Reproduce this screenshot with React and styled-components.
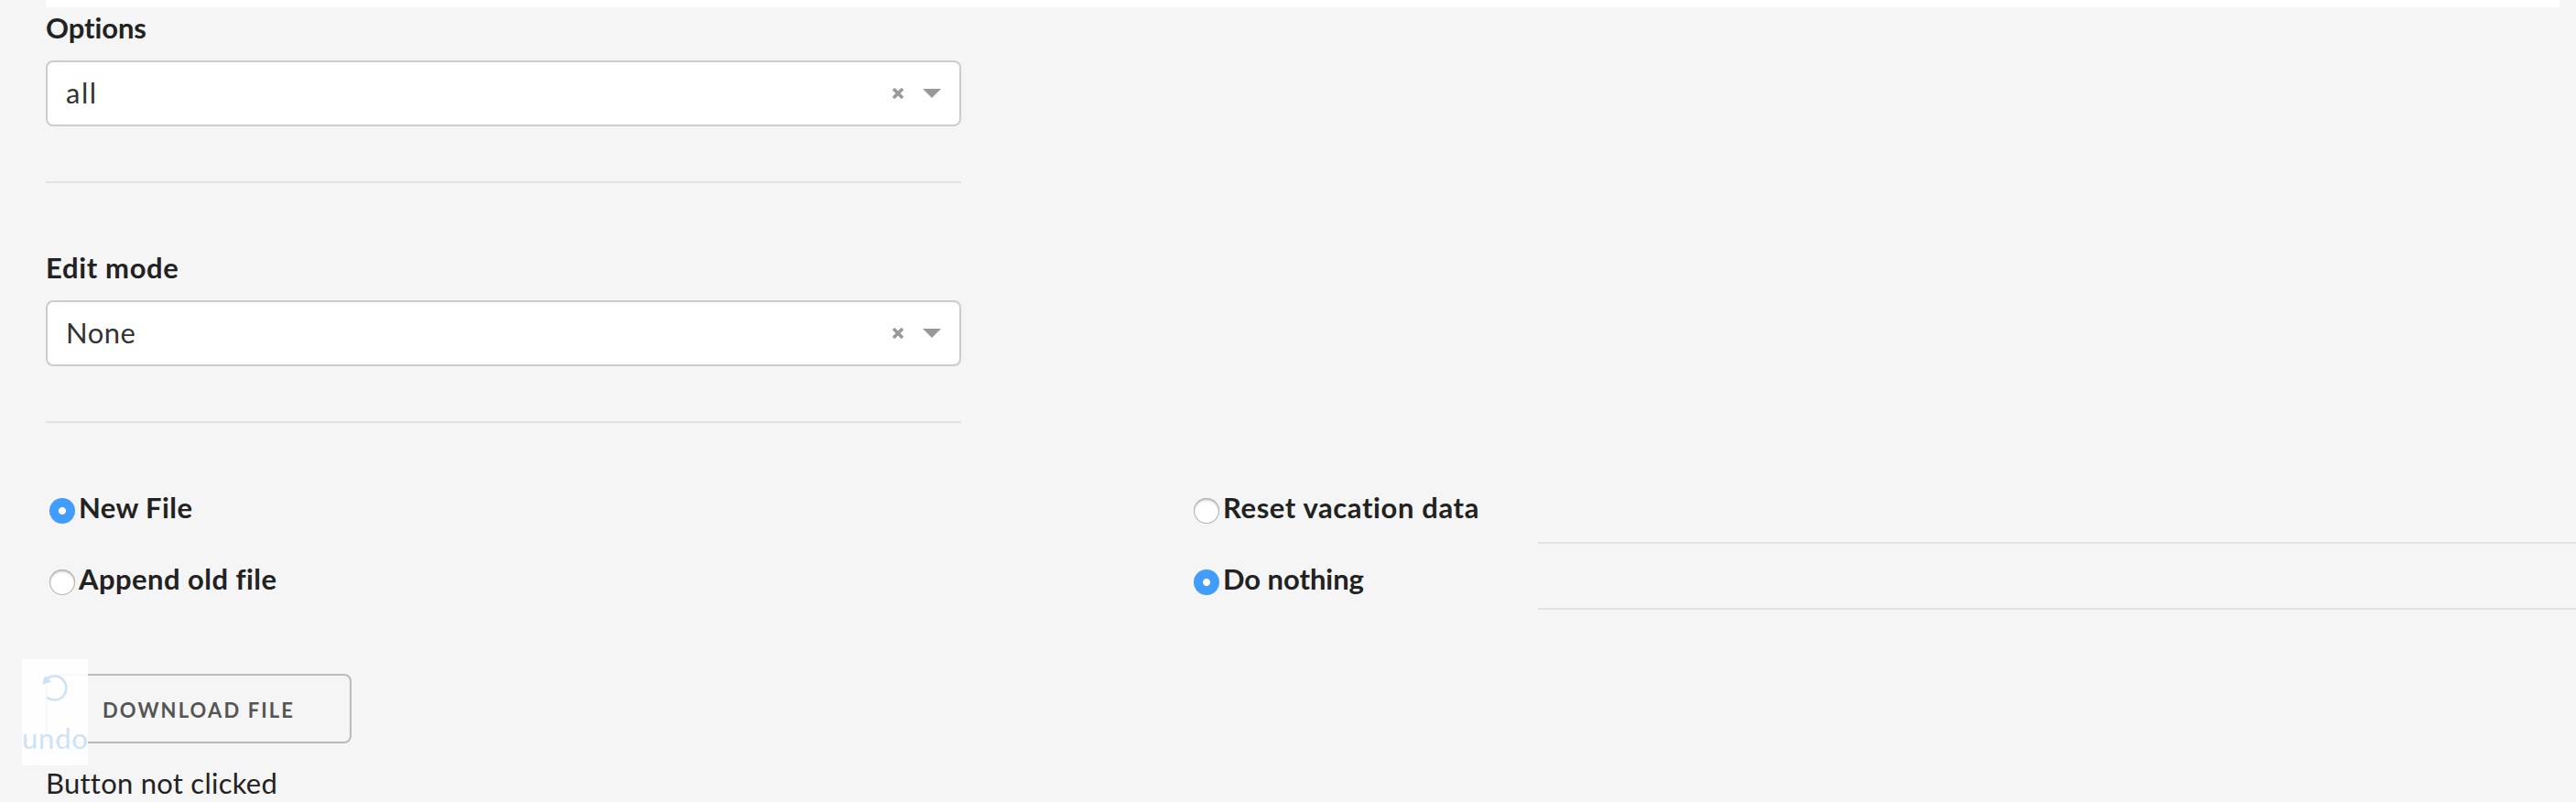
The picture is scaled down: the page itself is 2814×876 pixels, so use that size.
import React, { useState } from 'react';
import styled, { createGlobalStyle } from 'styled-components';

const GlobalStyle = createGlobalStyle`
  * { box-sizing: border-box; }
  body {
    margin: 0;
    background: #f5f5f5;
    color: #222;
    font: 400 31px/36px Lato, "Open Sans", sans-serif;
  }
`;

const Page = styled.main`
  position: relative;
  min-height: 876px;
  padding-left: 50px;
  overflow: hidden;
`;

const Panel = styled.div`
  height: 8px;
  margin-right: 18px;
  background: #fff;
`;

const Field = styled.section`
  width: 1000px;
  padding-top: ${p => p.$top}px;
`;

const Label = styled.div`
  font-weight: 700;
  letter-spacing: ${p => p.$spacing}px;
`;

const SelectBox = styled.div`
  display: flex;
  align-items: center;
  height: 72px;
  margin-top: 18px;
  padding: 0 20px;
  border: 2px solid #ccc;
  border-radius: 8px;
  background: #fff;
  color: #333;
`;

const Value = styled.span`
  flex: 1;
  padding-bottom: 2px;
  letter-spacing: ${p => p.$spacing}px;
`;

const ClearIcon = styled.svg`
  width: 14px;
  height: 14px;
  margin-right: 20px;
  stroke: #999;
  stroke-width: 3.6;
`;

const Caret = styled.span`
  border: 10px solid transparent;
  border-top-color: #999;
  border-bottom: 0;
`;

const Divider = styled.hr`
  height: 2px;
  margin: 60px 0 0;
  border: 0;
  background: #e1e1e1;
`;

const Choices = styled.div`
  display: flex;
  align-items: flex-start;
  height: 130px;
  margin-top: 74px;
`;

const RadioGroup = styled.div`
  display: flex;
  flex-direction: column;
  gap: 42px;
  width: ${p => p.$width}px;
  padding-left: 4px;
`;

const RadioLabel = styled.label`
  display: flex;
  gap: 4px;
  height: 36px;
  font-weight: 700;
  letter-spacing: ${p => p.$spacing}px;
`;

const RadioInput = styled.input`
  appearance: none;
  flex: none;
  width: 28px;
  height: 28px;
  margin: 8px 0 0;
  border-radius: 50%;
  background: #fff;
  box-shadow: inset 0 0 0 1px #b4b4b4, inset 0 2px 3px #b4b4b4;
  &:checked {
    background: radial-gradient(circle, #fff 3.6px, #429cfb 4.4px);
    box-shadow: none;
  }
`;

const EmptyTable = styled.div`
  flex: 1;
  height: 74px;
  margin-top: 56px;
  border: solid #e1e1e1;
  border-width: 2px 0;
`;

const DownloadButton = styled.button`
  display: block;
  width: 334px;
  height: 76px;
  margin: 70px 0 24px;
  padding: 4px 0 0 60px;
  border: 2px solid #bbb;
  border-radius: 8px;
  background: transparent;
  color: #555;
  font: 700 22px/68px Lato, sans-serif;
  letter-spacing: 2.1px;
  text-align: left;
  text-transform: uppercase;
`;

const Status = styled.div`
  padding-top: 1px;
  letter-spacing: 0.25px;
`;

const UndoButton = styled.div`
  position: absolute;
  left: 24px;
  top: 720px;
  width: 72px;
  height: 116px;
  padding-top: 14px;
  background: rgba(255, 255, 255, 0.9);
  color: #cce2f7;
  letter-spacing: 0.8px;
`;

const UndoIcon = styled.svg`
  display: block;
  width: 32px;
  height: 34px;
  margin: 0 0 20px 20px;
`;

function Select({ label, value, top, labelSpacing, valueSpacing }) {
  return (
    <Field $top={top}>
      <Label $spacing={labelSpacing}>{label}</Label>
      <SelectBox>
        <Value $spacing={valueSpacing}>{value}</Value>
        <ClearIcon viewBox="0 0 14 14"><path d="M2 2L12 12M12 2L2 12" /></ClearIcon>
        <Caret />
      </SelectBox>
      <Divider />
    </Field>
  );
}

function Radios({ name, items, initial, width }) {
  const [selected, setSelected] = useState(initial);
  return (
    <RadioGroup $width={width}>
      {items.map(([text, spacing]) => (
        <RadioLabel key={text} $spacing={spacing}>
          <RadioInput type="radio" name={name} checked={selected === text} onChange={() => setSelected(text)} />
          {text}
        </RadioLabel>
      ))}
    </RadioGroup>
  );
}

export default function App() {
  return (
    <>
      <GlobalStyle />
      <Page>
        <Panel />
        <Select label="Options" value="all" top={4} labelSpacing={-0.1} valueSpacing={1.5} />
        <Select label="Edit mode" value="None" top={74} labelSpacing={0.65} valueSpacing={0.5} />
        <Choices>
          <Radios name="file" width={1250} initial="New File" items={[['New File', 0.4], ['Append old file', 0.45]]} />
          <Radios name="vacation" width={380} initial="Do nothing" items={[['Reset vacation data', 0.6], ['Do nothing', -0.05]]} />
          <EmptyTable />
        </Choices>
        <DownloadButton>Download file</DownloadButton>
        <Status>Button not clicked</Status>
        <UndoButton>
          <UndoIcon viewBox="0 0 32 34" fill="none" stroke="currentColor">
            <path d="M7 7.6A13 13 0 1 1 7.3 27.7" strokeWidth="2.6" />
            <path d="M5 4L2 14L12 10.5Z" fill="currentColor" stroke="none" />
          </UndoIcon>
          undo
        </UndoButton>
      </Page>
    </>
  );
}
